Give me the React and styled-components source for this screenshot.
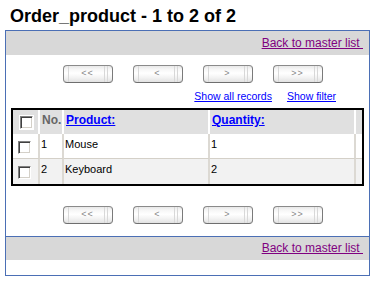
import React from 'react';
import styled, { createGlobalStyle } from 'styled-components';

const GlobalStyle = createGlobalStyle`
  html, body { margin: 0; padding: 0; background: #fff; }
  body { font-family: "Liberation Sans", Arial, sans-serif; color: #000; }
`;

const pages = ['<<', '<', '>', '>>'];

const rows = [
    { no: 1, product: 'Mouse', qty: 1 },
    { no: 2, product: 'Keyboard', qty: 2 },
];

function Pager() {
    return (
        <PagerRow>
            {pages.map(p => <PagerButton key={p} type="button">{p}</PagerButton>)}
        </PagerRow>
    );
}

export default function App() {
    return (
        <>
            <GlobalStyle />
            <Title>Order_product - 1 to 2 of 2</Title>
            <ListBox>
                <Band>
                    <MasterLink href="#">Back to master list&nbsp;</MasterLink>
                </Band>
                <Pager />
                <LinksRow>
                    <TextLink href="#">Show all records</TextLink>
                    <TextLink href="#">Show filter</TextLink>
                </LinksRow>
                <Grid>
                    <tbody>
                        <tr>
                            <HeadCell $w={27}><Check $head /></HeadCell>
                            <HeadCell $w={24} $pad><NoLabel>No.</NoLabel></HeadCell>
                            <HeadCell $w={146} $pad><HeadLink href="#">Product:</HeadLink></HeadCell>
                            <HeadCell $w={146} $pad><HeadLink href="#">Quantity:</HeadLink></HeadCell>
                            <HeadCell $last />
                        </tr>
                        {rows.map((r, i) => (
                            <tr key={r.no}>
                                <Cell $alt={i % 2 === 1} $sep={i === 0}><Check /></Cell>
                                <Cell $alt={i % 2 === 1} $sep={i === 0} $pad>{r.no}</Cell>
                                <Cell $alt={i % 2 === 1} $sep={i === 0} $pad>{r.product}</Cell>
                                <Cell $alt={i % 2 === 1} $sep={i === 0} $pad>{r.qty}</Cell>
                                <Cell $alt={i % 2 === 1} $sep={i === 0} $last />
                            </tr>
                        ))}
                    </tbody>
                </Grid>
                <Pager />
                <Band $bottom>
                    <MasterLink href="#">Back to master list&nbsp;</MasterLink>
                </Band>
                <Footer />
            </ListBox>
        </>
    );
}

const Title = styled.h1`
    margin: 0; padding: 6px 0 0 10px;
    font-size: 18px; line-height: 20px; font-weight: 700; color: #000;
`
const ListBox = styled.div`
    box-sizing: border-box; width: 365px; margin: 4px 0 0 5px;
    border: 1px solid #4b6fb5; background: #fff;
`
const Band = styled.div`
    display: flex; justify-content: flex-end; align-items: center;
    height: 24px; padding-right: 6px; background: #d8d8d8;
    ${p => p.$bottom && 'height: 23px; margin-top: 12px; border-top: 1px solid #4b6fb5;'}
`
const MasterLink = styled.a`
    font-size: 12px; line-height: 23px; color: #800080; text-decoration: underline;
`
const Footer = styled.div`
    height: 15px;
`
const PagerRow = styled.div`
    display: flex; justify-content: center; gap: 20px;
    padding-left: 10px; margin-top: 10px;
    table + & { margin-top: 20px; }
`
const line = '#d8d8d8';
const PagerButton = styled.button`
    box-sizing: border-box; width: 50px; height: 18px; padding: 0 0 3px;
    border: 1px solid #8a8a8a; border-bottom-color: #6e6e6e; border-right-color: #7a7a7a; border-radius: 4px;
    background:
        linear-gradient(to right,
            transparent 4px, ${line} 4px, ${line} 5px, transparent 5px,
            transparent calc(100% - 8px), ${line} calc(100% - 8px), ${line} calc(100% - 7px), transparent calc(100% - 7px),
            transparent calc(100% - 5px), ${line} calc(100% - 5px), ${line} calc(100% - 4px), transparent calc(100% - 4px)),
        linear-gradient(to bottom, #e8e8e8 0%, #f6f6f6 20%, #fff 45%, #f4f4f4 70%, #e2e2e2 100%);
    font-family: "Liberation Sans", Arial, sans-serif; font-size: 9px; line-height: 12px;
    letter-spacing: 1px; color: #888; cursor: pointer;
`
const LinksRow = styled.div`
    display: flex; justify-content: flex-end; gap: 15px;
    padding: 6px 33px 0 0; margin-bottom: 5px;
`
const TextLink = styled.a`
    font-size: 10.5px; line-height: 14px; color: #0000ff; text-decoration: underline;
`
const Grid = styled.table`
    width: 353px; margin: 0 0 0 5px;
    border: 2px solid #000; border-collapse: separate; border-spacing: 0;
    table-layout: fixed; font-size: 11px; line-height: 13px;
`
const HeadCell = styled.th`
    box-sizing: border-box; height: 24px; padding: 0;
    ${p => p.$w && `width: ${p.$w}px;`}
    ${p => p.$pad && 'padding: 3px 0 0 2px;'}
    background: #e0e0e0; text-align: left; vertical-align: top;
    border-right: 2px solid #fff;
    ${p => p.$last && 'border-right: 0;'}
    font-size: 12px; line-height: 14px; font-weight: 700; white-space: nowrap; overflow: hidden;
`
const Cell = styled.td`
    box-sizing: border-box; height: 25px; padding: 0;
    ${p => p.$pad && 'padding: 4px 0 0 1px;'}
    background: ${p => p.$alt ? '#f2f2f2' : '#fff'};
    vertical-align: top; color: #000;
    border-right: 2px solid #dcd9d3;
    ${p => p.$last && 'border-right: 0;'}
    ${p => p.$sep && 'border-bottom: 1px solid #d4d0c8;'}
`
const NoLabel = styled.span`
    color: #666;
`
const HeadLink = styled.a`
    color: #0000ff; text-decoration: underline;
`
const Check = styled.span`
    display: block; box-sizing: border-box; width: 13px; height: 13px;
    margin: ${p => p.$head ? '6px 0 0 7px' : '7px 0 0 5px'};
    background: #fff;
    border: 1px solid; border-color: #808080 #fff #fff #808080;
    box-shadow: inset 1px 1px #404040, inset -1px -1px #d4d0c8;
    ${p => p.$head && 'outline: 1px solid #fff;'}
`
